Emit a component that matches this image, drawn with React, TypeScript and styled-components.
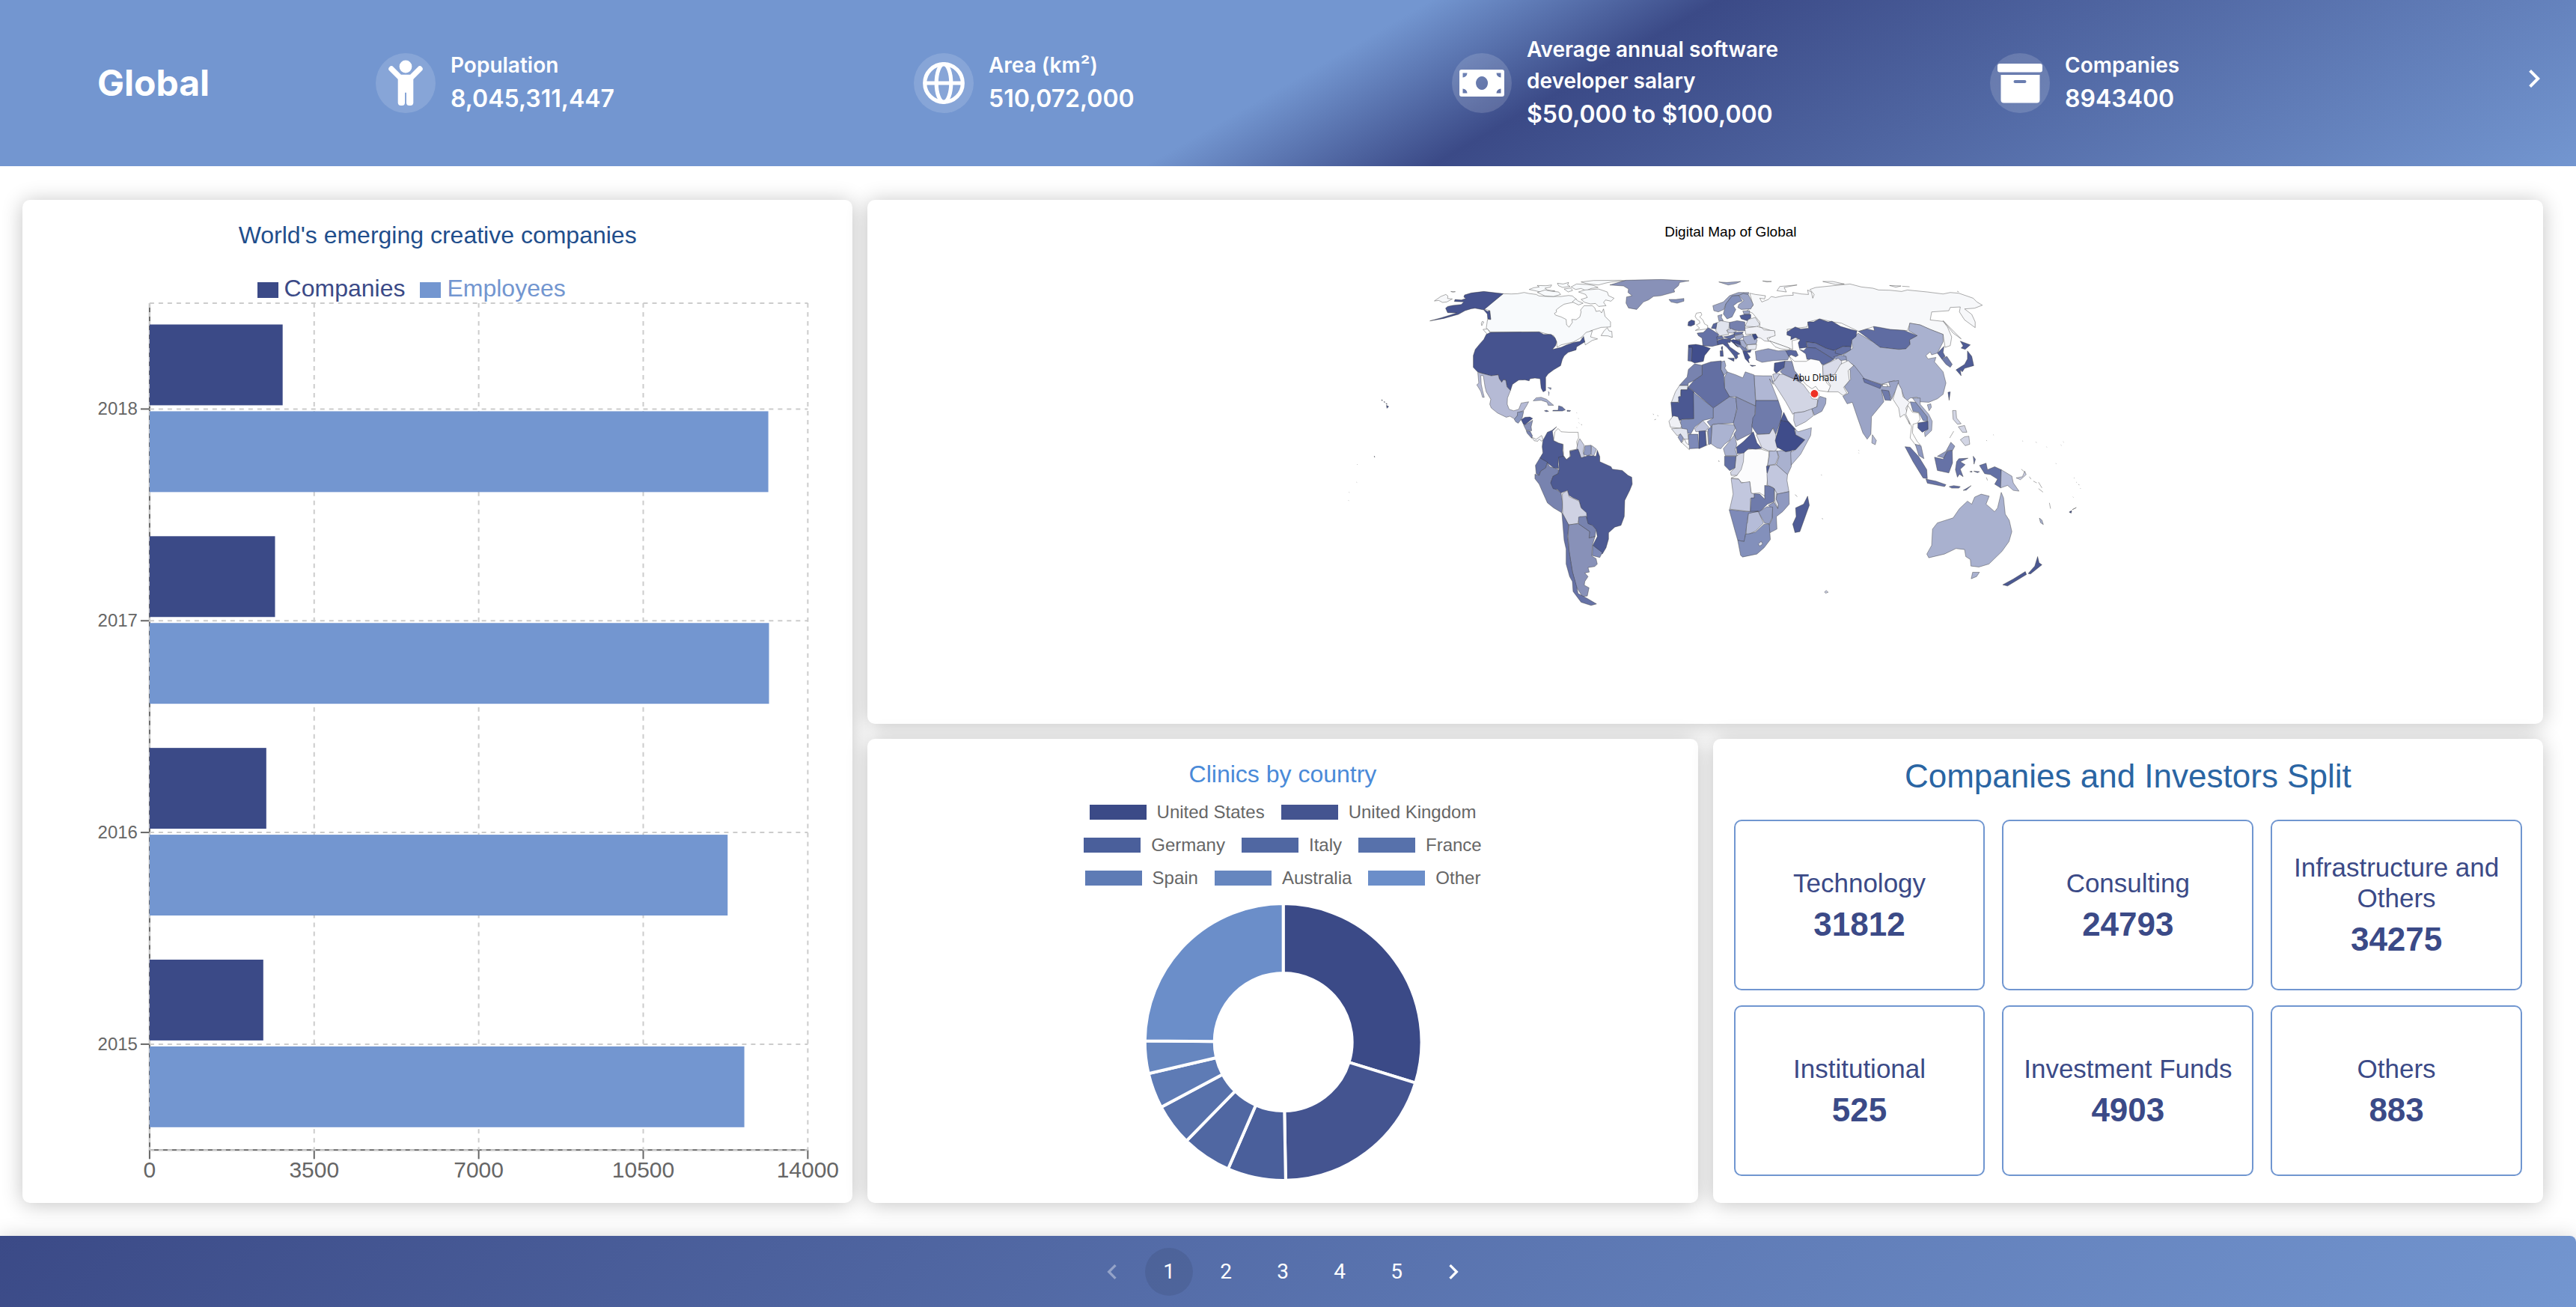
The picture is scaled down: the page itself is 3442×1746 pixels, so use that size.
import React from "react";
import styled, { createGlobalStyle } from "styled-components";

const NAVY = "#3b4a87";
const SKY = "#7396d0";
const SANS = `"Liberation Sans", Arial, Helvetica, sans-serif`;

const GlobalStyle = createGlobalStyle`
  *, *::before, *::after { box-sizing: border-box; }
  body { margin: 0; background: #fff; font-family: ${SANS}; }
  h1, h2, p, ul, dl, dd { margin: 0; padding: 0; }
  ul { list-style: none; }
  button { border: 0; padding: 0; background: none; color: inherit; font: inherit; cursor: pointer; }
`;

const Page = styled.div`
  display: flex;
  flex-direction: column;
  min-height: 100vh;
`;

/* ---------- header ---------- */

const Header = styled.header`
  display: flex;
  align-items: center;
  min-height: 222px;
  padding: 0 32px 0 130px;
  color: #fff;
  font-family: Inter, "Open Sans", sans-serif;
  background: linear-gradient(150deg, ${SKY} 50%, ${NAVY} 60%, ${SKY} 100%);
`;

const Title = styled.h1`
  flex: 0 0 372px;
  font-size: 48px;
  line-height: 60px;
  font-weight: 700;
`;

const Stats = styled.dl`
  flex: 1;
  display: grid;
  grid-template-columns: repeat(4, 1fr);
  align-items: center;
`;

const Stat = styled.div`
  display: flex;
  align-items: center;
  gap: 20px;
`;

const IconDisc = styled.span`
  flex: none;
  width: 80px;
  height: 80px;
  border-radius: 50%;
  background: rgba(255, 255, 255, 0.15);
  svg { display: block; }
`;

const StatText = styled.div`
  max-width: 360px;
  font-weight: 600;
  dt { font-size: 28px; line-height: 42px; }
  dd { font-size: 32px; line-height: 48px; }
`;

const NextStat = styled.button`
  flex: none;
  width: 48px;
  height: 48px;
  margin: 0 0 12px -16px;
  svg { display: block; }
`;

/* ---------- dashboard ---------- */

const Main = styled.main`
  flex: 1;
  display: grid;
  grid-template-columns: repeat(3, minmax(0, 1fr));
  grid-template-rows: minmax(0, 35fr) minmax(0, 31fr);
  gap: 20px;
  padding: 45px 44px 44px 30px;
`;

const Card = styled.section<{ $area: string }>`
  grid-area: ${(p) => p.$area};
  display: flex;
  flex-direction: column;
  min-height: 0;
  background: #fff;
  border-radius: 10px;
  box-shadow: 0 2px 28px rgba(0, 0, 0, 0.24);
`;

const CardTitle = styled.h2<{ $color: string; $large?: boolean }>`
  text-align: center;
  font-weight: 400;
  color: ${(p) => p.$color};
  font-size: ${(p) => (p.$large ? 44 : 32)}px;
  line-height: ${(p) => (p.$large ? 52 : 38)}px;
  padding-top: ${(p) => (p.$large ? 24 : 28)}px;
`;

const BarLegend = styled.ul`
  display: flex;
  justify-content: center;
  gap: 20px;
  padding: 34px 70px 0 0;
  font-size: 32px;
  line-height: 36px;
`;

const BarLegendItem = styled.li<{ $color: string }>`
  display: flex;
  align-items: center;
  gap: 8px;
  color: ${(p) => p.$color};
  &::before {
    content: "";
    width: 28px;
    height: 21px;
    margin-top: 4px;
    background: ${(p) => p.$color};
  }
`;

const Plot = styled.svg`
  display: block;
  flex: 1;
  width: 100%;
  min-height: 0;
  font-family: ${SANS};
`;

const PieLegend = styled.ul`
  align-self: center;
  display: flex;
  flex-wrap: wrap;
  justify-content: center;
  gap: 24px 22px;
  width: 560px;
  padding-top: 22px;
  color: #666;
  font-size: 24px;
  line-height: 20px;
`;

const PieLegendItem = styled.li<{ $color: string }>`
  display: flex;
  gap: 14px;
  &::before {
    content: "";
    width: 76px;
    height: 20px;
    background: ${(p) => p.$color};
  }
`;

const Tiles = styled.ul`
  flex: 1;
  display: grid;
  grid-template-columns: repeat(3, 1fr);
  grid-template-rows: repeat(2, 1fr);
  gap: 20px 23px;
  padding: 32px 28px 36px;
`;

const Tile = styled.li`
  display: flex;
  flex-direction: column;
  align-items: center;
  justify-content: center;
  gap: 10px;
  text-align: center;
  color: ${NAVY};
  border: 2px solid #7096d0;
  border-radius: 10px;
  font-size: 35px;
  line-height: 41px;
  strong { font-size: 44px; line-height: 50px; }
`;

/* ---------- footer ---------- */

const Footer = styled.footer`
  display: flex;
  justify-content: center;
  align-items: center;
  gap: 12px;
  min-height: 95px;
  padding-right: 14px;
  color: #fff;
  font-family: Roboto, sans-serif;
  font-size: 28px;
  border-radius: 0 8px 0 0;
  background: linear-gradient(135deg, ${NAVY}, ${SKY});
  box-shadow: 0 2px 28px rgba(0, 0, 0, 0.18);
`;

const PageButton = styled.button<{ $current?: boolean }>`
  display: grid;
  place-items: center;
  width: 64px;
  height: 64px;
  border-radius: 50%;
  background: ${(p) => (p.$current ? "rgba(0, 0, 0, 0.08)" : "none")};
  &:disabled { opacity: 0.38; }
`;

const Chevron = ({ size, back }: { size: number; back?: boolean }) => (
  <svg width={size} height={size} viewBox="0 0 24 24" fill="currentColor" aria-hidden="true">
    <path
      d={back
        ? "M15.41 7.41 14 6l-6 6 6 6 1.41-1.41L10.83 12z"
        : "M10 6 8.59 7.41 13.17 12l-4.58 4.59L10 18l6-6z"}
    />
  </svg>
);

const icons: Record<string, React.ReactNode> = {
  person: (
    <g fill="#fff">
      <circle cx="40" cy="18" r="8.4" />
      <path d="M21 21 34 34M59 21 46 34" stroke="#fff" strokeWidth="7.4" strokeLinecap="round" />
      <path d="M34 28.7h12l4.3 4V66.500a4 4 0 0 1-4 3.500h-1.500a3.800 3.800 0 0 1-3.800-3.500V52.700h-2V66.500a3.800 3.800 0 0 1-3.800 3.500h-1.500a4 4 0 0 1-4-3.500V32.700z" />
    </g>
  ),
  globe: (
    <g fill="none" stroke="#fff" strokeWidth="5.2">
      <circle cx="40" cy="40" r="25.3" />
      <ellipse cx="40" cy="40" rx="9.8" ry="25.3" />
      <path d="M15 40h50" />
    </g>
  ),
  money: (
    <path
      fill="#fff"
      fillRule="evenodd"
      d="M13 22H67a3 3 0 0 1 3 3V55a3 3 0 0 1-3 3H13a3 3 0 0 1-3-3V25a3 3 0 0 1 3-3zM14.500 26.500v6a6 6 0 0 0 6-6zM65.500 26.500h-6a6 6 0 0 0 6 6zM14.500 53.500h6a6 6 0 0 0-6-6zM65.500 53.500v-6a6 6 0 0 0-6 6zM40 31a8 9 0 1 0 .1 0z"
    />
  ),
  archive: (
    <g fill="#fff">
      <rect x="10" y="14" width="60" height="11.5" rx="3" />
      <path fillRule="evenodd" d="M14.500 29H66.500V62.500a4 4 0 0 1-4 4H18.500a4 4 0 0 1-4-4zM33.500 36a1.800 1.800 0 0 0 0 4h13a1.800 1.800 0 0 0 0-4z" />
    </g>
  ),
};

const stats = [
  { icon: "person", label: "Population", value: "8,045,311,447" },
  { icon: "globe", label: "Area (km²)", value: "510,072,000" },
  { icon: "money", label: "Average annual software developer salary", value: "$50,000 to $100,000" },
  { icon: "archive", label: "Companies", value: "8943400" },
];

/* ---------- bar chart ---------- */

const years = [
  { year: "2018", companies: 2830, employees: 13160 },
  { year: "2017", companies: 2668, employees: 13175 },
  { year: "2016", companies: 2482, employees: 12295 },
  { year: "2015", companies: 2418, employees: 12650 },
];

const BarChart = () => {
  const left = 170;
  const width = 880;
  const top = 2;
  const band = 283;
  const bottom = top + band * 4;
  const scale = (v: number) => (v / 14000) * width;
  const ticks = [0, 3500, 7000, 10500, 14000];
  return (
    <Plot viewBox="0 0 1110 1196" preserveAspectRatio="xMidYMin meet" role="img" aria-label="Companies and employees by year">
      <g stroke="#666" strokeWidth="2">
        <path d={`M${left} ${top}V${bottom}H${left + width}`} fill="none" />
        {ticks.map((t) => <path key={t} d={`M${left + scale(t)} ${bottom}v12`} />)}
        {years.map((y, i) => <path key={y.year} d={`M${left - 12} ${top + band * (i + 0.5)}h12`} />)}
      </g>
      <g stroke="#ccc" strokeWidth="2" strokeDasharray="6 6">
        {ticks.map((t) => <path key={t} d={`M${left + scale(t)} ${top}V${bottom}`} />)}
        {[0, 0.5, 1.5, 2.5, 3.5, 4].map((n) => <path key={n} d={`M${left} ${top + band * n}h${width}`} />)}
      </g>
      {years.map((y, i) => (
        <g key={y.year}>
          <rect x={left} y={top + band * i + 28.5} width={scale(y.companies)} height="108" fill={NAVY} />
          <rect x={left} y={top + band * i + 144.5} width={scale(y.employees)} height="108" fill={SKY} />
          <text x={left - 16} y={top + band * (i + 0.5) + 8} textAnchor="end" fontSize="24" fill="#666">{y.year}</text>
        </g>
      ))}
      {ticks.map((t) => (
        <text key={t} x={left + scale(t)} y={bottom + 37} textAnchor="middle" fontSize="30" fill="#666">{t}</text>
      ))}
    </Plot>
  );
};

/* ---------- doughnut ---------- */

const clinics = [
  { name: "United States", color: "#3b4a87", end: 107.2 },
  { name: "United Kingdom", color: "#445490", end: 179 },
  { name: "Germany", color: "#4a5f9b", end: 203.5 },
  { name: "Italy", color: "#5067a2", end: 224.4 },
  { name: "France", color: "#5771ab", end: 241.9 },
  { name: "Spain", color: "#5e7bb5", end: 256.8 },
  { name: "Australia", color: "#6686bf", end: 270.5 },
  { name: "Other", color: "#6b8ec9", end: 360 },
];

const ring = (from: number, to: number, outer: number, inner: number) => {
  const at = (deg: number, r: number) => {
    const a = (deg * Math.PI) / 180;
    return `${(Math.sin(a) * r).toFixed(2)} ${(-Math.cos(a) * r).toFixed(2)}`;
  };
  return `M${at(from, outer)}A${outer} ${outer} 0 0 1 ${at(to, outer)}L${at(to, inner)}A${inner} ${inner} 0 0 0 ${at(from, inner)}z`;
};

const Doughnut = () => (
  <Plot viewBox="-556 -205 1110 416" role="img" aria-label="Clinics by country">
    {clinics.map((c, i) => (
      <path key={c.name} d={ring(i ? clinics[i - 1].end : 0, c.end, 185, 92)} fill={c.color} stroke="#fff" strokeWidth="4" />
    ))}
  </Plot>
);

/* ---------- world map ---------- */

type Land = [string, string];

const americas: Land[] = [
  ["#f8fafc", "M568 157 600 158 625 157 652 152 670 156 700 160 712 166 745 168 800 168 830 164 845 166 862 180 845 192 812 199 795 210 780 222 782 230 773 236 778 243 800 250 820 260 822 282 832 291 845 272 843 260 860 261 875 250 880 230 878 222 892 205 925 205 935 214 940 228 955 225 962 234 970 218 976 248 998 270 998 290 960 292 920 305 880 333 850 350 800 362 784 372 782 350 770 325 712 310 517 310 500 295 505 260 518 260 514 225 490 218z"],
  ["#f8fafc", "M672 140 690 133 712 130 704 124 740 125 762 122 758 130 735 135 745 142 775 146 745 152 715 150 700 146z"],
  ["#f8fafc", "M705 152 735 142 760 147 790 150 798 160 770 168 735 166z"],
  ["#f8fafc", "M785 115 808 118 830 112 826 122 836 128 806 132 790 125zM812 138 838 134 846 144 828 150z"],
  ["#f8fafc", "M840 130 862 118 905 120 930 124 948 132 920 136 900 145 880 136 858 140z"],
  ["#f8fafc", "M880 110 930 104 1040 103 1060 105 1000 110 980 114 950 122 930 120 900 116z"],
  ["#f8fafc", "M870 150 895 142 925 140 950 138 985 150 990 165 1012 175 1000 187 978 182 970 192 980 205 950 208 938 196 918 198 895 192 880 180 905 172 898 160z"],
  ["#f8fafc", "M845 190 858 178 868 186 888 195 870 202zM960 325 972 306 985 293 992 306 1003 308 1005 332 988 326z"],
  ["#f8fafc", "M880 333 900 312 925 305 918 330 946 338 925 344 897 362 893 345zM487 300 505 298 516 314 508 324zM480 276 484 268 490 270 482 285z"],
  ["#f7f8fa", "M292 186 318 168 338 160 346 166 345 176 364 178 342 190 325 192 310 184zM358 148 376 149 366 151z"],
  ["#46538f", "M413 162 440 154 490 148 568 157 492 220 505 228 514 225 518 260 506 258 504 238 490 222 455 215 440 217 415 225 388 240 372 244 330 256 274 266 318 254 350 244 382 234 345 233 337 215 345 208 365 204 400 200 410 190 372 188 375 180 400 182 418 176 410 170z"],
  ["#46538f", "M500 320 517 312 712 310 730 320 760 320 776 334 782 350 778 365 765 380 800 372 822 362 850 352 876 348 890 328 895 350 862 370 860 382 828 392 812 406 805 420 798 445 770 462 748 478 738 492 738 545 728 550 720 535 716 498 695 495 675 498 672 506 655 502 630 503 605 520 597 545 583 530 578 503 568 502 562 512 552 498 548 482 520 486 490 478 465 470 448 452 448 405 456 380 474 358 490 340z"],
  ["#b5bad5", "M466 472 490 478 520 486 548 482 552 498 562 512 568 502 578 503 583 530 597 545 585 575 584 600 592 620 610 626 630 620 640 595 670 590 662 605 650 625 632 632 615 660 595 648 580 652 545 635 520 615 514 600 518 580 500 550 495 530 488 485 478 485 480 520 486 548 492 572 485 572 478 548 462 522 470 515z"],
  ["#8a96bd", "M612 660 625 645 625 632 650 628 644 655 628 676 618 670z"],
  ["#46538f", "M640 662 655 652 675 651 686 657 672 668 658 680 650 682z"],
  ["#8891b8", "M650 684 660 680 686 664 680 690 682 706 660 704z"],
  ["#7883af", "M660 706 676 708 685 726 682 736 664 716z"],
  ["#f3f4f8", "M682 732 700 740 722 725 728 742 722 748 712 740 706 748 692 746z"],
  ["#a5adcc", "M688 586 700 574 720 572 742 580 770 604 748 604 744 592 720 584z"],
  ["#6370a4", "M790 606 804 610 817 622 805 627 766 627 768 624 788 624zM733 626 742 624 750 628 740 630zM824 624 838 625 836 628 824 628z"],
  ["#8a96bd", "M746 533 760 534 758 542M748 548 752 552 750 566"],
  ["#4d5a93", "M782 690 765 708 770 745 790 755 808 760 806 785 810 810 790 815 788 840 790 858 770 855 745 835 715 815 727 795 724 770 727 745 745 712 764 704z"],
  ["#fdfdfe", "M775 710 788 697 800 710 830 712 868 712 870 735 862 750 866 770 862 780 835 785 835 810 820 822 810 805 808 760 790 755 770 745z"],
  ["#c8cce0", "M875 738 893 765 888 790 895 812 880 815 872 792 863 775 868 750z"],
  ["#8f99c0", "M896 766 920 764 922 800 905 806 890 800z"],
  ["#b5bcd8", "M922 765 942 780 930 808 920 800z"],
  ["#6370a4", "M715 815 745 832 738 855 718 868 712 885 700 878 697 845z"],
  ["#7883af", "M745 835 755 850 775 856 790 862 788 878 768 888 760 910 768 932 785 945 800 955 806 1000 803 1035 770 1015 745 995 725 950 712 920 695 898 695 880 712 885 718 868 738 855z"],
  ["#4d5a93", "M790 812 810 808 822 822 838 808 835 788 868 780 880 815 910 805 940 808 945 784 955 810 955 830 1000 850 1005 860 1045 865 1068 885 1083 892 1085 920 1075 945 1055 985 1053 1050 1040 1085 1015 1092 990 1115 990 1140 980 1175 965 1200 927 1165 945 1130 940 1102 925 1085 905 1080 900 1040 880 1015 872 985 848 975 832 965 825 945 800 955 785 942 768 938 758 915 768 888 788 878 792 860z"],
  ["#cfd2e3", "M805 958 825 945 832 970 872 988 880 1015 902 1035 903 1052 875 1050 866 1078 830 1083 815 1055 806 1035z"],
  ["#7883af", "M870 1052 900 1048 908 1078 925 1085 940 1102 936 1130 912 1136 914 1110 870 1080z"],
  ["#7e8ab8", "M927 1165 965 1194 955 1214 925 1206z"],
  ["#8891b8", "M830 1083 868 1078 914 1110 912 1136 936 1130 925 1165 923 1208 940 1218 945 1240 935 1250 908 1254 913 1272 895 1276 908 1290 895 1310 893 1325 912 1335 905 1368 885 1370 860 1330 845 1270 832 1190 828 1130z"],
  ["#6672a6", "M803 1035 815 1055 830 1083 826 1130 832 1190 845 1270 862 1330 868 1358 905 1378 942 1400 920 1406 880 1393 848 1350 845 1310 834 1290 820 1240 820 1180 812 1145z"],
  ["#8891b8", "M995 122 1060 103 1200 100 1313 105 1275 112 1270 125 1252 140 1255 150 1200 165 1170 168 1150 182 1130 190 1103 220 1070 214 1060 195 1062 170 1084 165 1068 152 1070 138 1050 126z"],
  ["#8390bb", "M1232 180 1260 180 1292 176 1292 187 1265 195 1240 190z"],
  ["#46538f", "M80 582 84 583 83 586zM90 589 94 591 92 593zM98 596 103 599 100 600zM100 604 109 609 102 616zM51 808 54 810 52 812z"],
  ["#8891b8", "M862 634 864 636M869 656 870 658M871 674 873 676M880 681 884 683M862 693 864 694M1168 639 1172 642M1186 644 1189 648M1174 662 1180 660M1432 826 1434 830"],
  ["#46538f", "M-52 985 -50 987M-50 952 -48 954M-18 840 -16 842M-20 912 -18 913"],
];

const east: Land[] = [
  ["#fcfcfd", "M285 785 320 778 350 780 378 790 372 850 372 900 368 940 362 968 345 955 315 958 310 910 300 918 280 912 270 898 245 895 265 885 280 850z"],
  ["#d2d5e4", "M262 808 290 788 288 830 280 862 265 885 245 885 243 872 258 855z"],
  ["#6370a4", "M222 808 262 808 258 855 240 866 222 845z"],
  ["#b5bcd8", "M378 788 405 786 410 810 400 840 372 845 378 810z"],
  ["#a9b1cf", "M405 788 420 785 440 790 455 785 455 850 442 882 403 842 412 810z"],
  ["#4f5c96", "M368 848 380 846 380 868 370 876z"],
  ["#c2c7de", "M380 845 403 842 442 882 440 905 447 950 405 960 392 934 372 925 370 880z"],
  ["#c2c7de", "M245 898 272 900 280 915 310 910 315 955 326 960 326 975 312 978 312 1030 240 1020 252 960z"],
  ["#6f7bab", "M315 975 326 975 326 958 345 960 362 980 362 925 380 928 396 938 395 990 372 1000 345 1030 312 1030z"],
  ["#e1e4ee", "M396 940 404 955 403 980 411 1000 408 1018 398 990z"],
  ["#8f99c0", "M405 960 447 950 448 1000 425 1030 403 1050 405 1100 380 1115 375 1090 388 1060 390 1020 375 1005 395 992 408 1018 410 1000 402 980z"],
  ["#959fc4", "M340 1032 370 1010 390 1012 388 1055 378 1080 362 1076z"],
  ["#b5bcd8", "M305 1035 340 1030 358 1076 330 1108 298 1125 296 1078 302 1075z"],
  ["#7e8ab8", "M238 1022 300 1030 340 1028 305 1038 300 1078 292 1150 268 1145 258 1105z"],
  ["#8390bb", "M268 1145 290 1150 296 1120 312 1118 330 1112 360 1080 378 1080 382 1142 360 1175 335 1200 285 1212 278 1205z"],
  ["#e1e4ee", "M340 1160 350 1149 355 1160 345 1168z"],
  ["#4f5c96", "M512 968 518 1005 510 1030 485 1110 468 1114 460 1080 472 1050 470 1015 498 1000z"],
  ["#f7f8fa", "M310 155 330 160 365 165 362 178 345 175 352 190 375 180 385 168 400 172 430 165 462 163 460 152 490 158 515 160 512 142 525 150 530 175 535 160 520 140 540 132 600 125 660 118 700 130 740 135 760 142 800 143 840 148 860 142 930 150 985 158 1010 152 1040 155 1090 175 1103 190 1122 203 1095 215 1060 218 1085 240 1097 270 1097 293 1060 262 1042 230 1045 210 1010 212 1005 225 945 230 940 262 985 268 1000 290 1015 330 1010 365 992 372 985 320 940 300 905 282 870 275 860 305 790 300 740 290 690 308 630 275 600 270 555 258 515 270 510 290 440 300 445 318 480 340 458 345 460 380 400 355 372 345 398 310 345 290 345 270 320 235 300 225 322 205z"],
  ["#f7f8fa", "M405 145 415 128 475 122 430 132 438 150zM565 108 600 108 640 118 610 120zM798 124 838 126 820 131zM842 127 868 129M355 106 386 108 370 110zM985 265 1048 338 1020 315zM1034 147 1040 150"],
  ["#9ba4c6", "M202 110 230 112 278 108 262 116 235 122z"],
  ["#5f6ca2", "M690 308 720 298 745 305 742 288 765 292 800 300 850 304 895 325 868 342 870 360 855 378 830 380 765 372 740 350z"],
  ["#a9b1cf", "M688 315 740 350 765 372 830 380 855 378 870 360 868 342 895 325 865 305 868 275 905 282 940 300 985 320 985 350 965 395 945 402 940 390 925 405 932 418 960 412 955 430 985 470 995 515 985 560 965 578 935 592 905 590 895 572 870 575 855 590 835 530 815 505 770 520 710 498 690 480 670 440 650 430 636 402 670 375 665 345z"],
  ["#a9b1cf", "M930 602 942 598 944 612 936 626z"],
  ["#4f5c96", "M1002 552 1010 550 1006 584z"],
  ["#5a679e", "M965 395 988 368 985 392 992 408 980 418z"],
  ["#6f7bab", "M980 418 998 408 1017 440 1010 452 995 440z"],
  ["#4f5c96", "M1045 347 1080 362 1062 380 1048 375 1055 366zM1070 386 1085 408 1092 445 1060 456 1052 470 1045 462 1048 486 1030 462 1060 440 1070 418z"],
  ["#9ba4c6", "M650 448 675 445 692 470 710 498 765 535 772 520 800 530 795 510 830 505 828 530 815 555 805 580 795 548 770 545 778 590 735 650 733 720 720 740 705 715 685 650 668 592 650 598 635 568 655 555 640 530 662 500 660 462z"],
  ["#6672a6", "M705 495 735 508 770 522 765 537 710 512z"],
  ["#fff", "M773 520 790 520 790 530 774 528z"],
  ["#6f7bab", "M770 542 795 546 803 585 782 583z"],
  ["#b0b7d4", "M738 722 752 745 748 762 736 755z"],
  ["#f3f4f8", "M828 515 840 540 845 570 868 592 855 615 862 645 868 680 850 640 835 652 830 615 810 580 818 548z"],
  ["#fff", "M862 605 878 632 900 635 905 660 895 675 880 680 878 715 895 750 905 762 892 768 870 735 875 690 855 640z"],
  ["#8390bb", "M870 590 890 592 930 650 930 668 915 665 900 632 880 628z"],
  ["#abb3d1", "M878 575 905 575 905 600 935 640 947 668 945 705 922 730 920 712 932 700 930 650 895 600z"],
  ["#4f5c96", "M897 675 932 668 932 700 912 712 897 695z"],
  ["#8f99c0", "M888 760 908 766 918 818 900 805zM965 808 995 788 1012 752 1026 768 1018 785 1000 785 988 815z"],
  ["#6672a6", "M852 770 870 772 900 810 928 862 930 898 915 895 880 830zM925 900 960 908 995 922 990 930 930 916z"],
  ["#6672a6", "M955 812 985 820 1000 788 1017 785 1018 835 1005 875 965 865zM1032 830 1040 818 1072 816 1045 830 1062 842 1045 860 1055 890 1042 880 1035 892 1028 862z"],
  ["#6672a6", "M1090 808 1098 820 1093 840zM1006 930 1022 926 1045 930 1040 936 1015 936zM1055 945 1083 926 1066 944zM1078 870 1086 868 1086 872zM1092 868 1112 870 1105 874zM1136 893 1140 905"],
  ["#6370a4", "M1112 845 1135 836 1140 862 1165 850 1188 862 1186 935 1165 920 1175 900 1150 882 1130 878z"],
  ["#b5bcd8", "M1188 862 1225 888 1230 915 1250 948 1230 945 1210 925 1186 935z"],
  ["#c8cce0", "M1240 895 1262 890 1270 868 1275 882 1255 902zM1258 860 1270 872"],
  ["#5f6ca2", "M1286 890 1292 900M1300 908 1312 915M1318 912 1330 935M1318 938 1334 952M1356 995 1360 1018"],
  ["#d2d5e4", "M1018 625 1030 625 1032 655 1048 678 1035 680 1020 660zM1038 690 1060 685 1068 712 1052 712zM1045 742 1060 730 1075 728 1078 760 1062 766zM1008 735 1022 708"],
  ["#a9b1cf", "M1188 953 1196 975 1202 1040 1216 1065 1225 1110 1215 1150 1190 1190 1145 1240 1110 1252 1082 1248 1080 1222 1064 1210 1060 1182 1030 1178 990 1200 935 1215 928 1200 945 1165 948 1100 965 1075 1020 1055 1042 1018 1070 988 1085 1000 1095 972 1118 960 1146 968 1135 1000 1165 1030 1175 1015z"],
  ["#a9b1cf", "M1088 1273 1112 1273 1102 1290 1083 1299zM1321 1056 1330 1064 1335 1082 1325 1074z"],
  ["#4b5892", "M1315 1210 1320 1235 1330 1243 1290 1280 1282 1278 1305 1248zM1272 1270 1276 1282 1210 1328 1193 1323 1230 1300z"],
  ["#3b4a87", "M1425 1032 1434 1026 1432 1036zM1436 1022 1450 1014 1440 1020z"],
  ["#c8cce0", "M571 1352 577 1346 584 1353 575 1357z"],
  ["#8891b8", "M560 882 561 885M562 1057 566 1060M690 784 692 786M690 794 691 796M1136 744 1138 747M1309 751 1311 754M1404 750 1406 752M1160 722 1162 724M1262 747 1264 748M1346 770 1347 772M1396 763 1398 765M1378 837 1380 838M1442 895 1444 896M1450 912 1452 914M1458 920 1460 924M1464 936 1465 938M1438 971 1440 973M468 962 476 970M200 826 203 829"],
];

const centre: Land[] = [
  ["#9ba4c6", "M148 85 190 70 215 45 250 32 292 32 290 40 270 36 252 44 225 46 200 78 192 100 170 110 152 105z"],
  ["#8390bb", "M225 46 252 44 266 66 248 72 230 85 240 100 225 130 205 138 190 118 200 78z"],
  ["#9ba4c6", "M252 44 270 36 290 40 310 80 300 98 262 100 248 92 252 80 272 65z"],
  ["#9ba4c6", "M268 106 295 105 296 118 272 118z"],
  ["#4f5c96", "M256 125 275 120 300 120 300 134 285 145 262 138z"],
  ["#9ba4c6", "M168 125 185 120 182 132 190 145 172 145z"],
  ["#fff", "M82 115 100 112 104 122 95 130 108 142 115 158 128 165 125 178 78 184 95 175 82 162 96 155 94 145 85 140 77 128z"],
  ["#46538f", "M50 150 62 142 75 146 75 160 60 167 48 165z"],
  ["#6672a6", "M85 195 110 192 130 173 145 182 172 200 165 225 170 242 145 248 108 245 105 215 90 205z"],
  ["#414e8c", "M50 243 80 240 108 245 138 256 115 285 110 308 75 315 62 308 65 252 50 252z"],
  ["#5a679e", "M50 252 65 252 63 308 48 306z"],
  ["#e1e4ee", "M162 155 180 145 215 152 212 176 204 184 212 200 175 206 160 185z"],
  ["#5a679e", "M142 175 150 158 165 153 160 178z"],
  ["#7580ae", "M215 152 245 145 276 150 278 185 250 186 215 176z"],
  ["#c8cce0", "M204 184 222 177 243 187 230 195 212 194z"],
  ["#6672a6", "M163 210 185 206 190 216 165 221zM232 192 270 190 265 198 235 204z"],
  ["#5f6ca2", "M190 210 212 206 235 198 235 212 215 220z"],
  ["#4f5c96", "M165 225 190 217 220 220 218 232 206 232 216 250 256 278 246 282 248 292 240 300 232 285 205 252 188 238 168 242zM208 295 234 295 232 308zM177 266 188 264 190 288 178 288zM182 250 187 248 187 262 182 260z"],
  ["#a5adcc", "M235 206 268 198 272 208 255 220 240 222z"],
  ["#a9b1cf", "M268 210 300 202 326 222 322 238 285 242 272 226z"],
  ["#3b4a87", "M305 200 320 198 330 212 315 222z"],
  ["#e5e8f1", "M285 242 324 240 320 260 288 262z"],
  ["#7580ae", "M225 225 255 222 275 240 286 262 270 268 258 252 240 245z"],
  ["#a5adcc", "M255 222 270 222 284 245 278 256 262 245z"],
  ["#414e8c", "M218 225 230 220 255 228 258 242 242 236 232 232 250 252z"],
  ["#46538f", "M268 268 302 262 298 272 285 272 298 292 290 300 294 315 278 298zM297 323 320 325 305 328z"],
  ["#e5e8f1", "M278 165 290 140 318 132 336 160 325 170 282 168z"],
  ["#f0f1f6", "M276 175 325 168 345 174 352 182 395 185 398 205 365 215 372 228 355 226 340 215 328 212 320 198 280 200z"],
  ["#8f99c0", "M318 268 345 262 370 257 410 266 440 264 455 285 448 302 390 305 345 312 322 302z"],
  ["#5a679e", "M440 265 458 262 482 266 490 284 480 290 462 282 452 288z"],
  ["#f7f8fa", "M376 226 400 235 428 245 455 255 456 262 420 258 398 250z"],
  ["#4b5892", "M445 190 478 170 500 178 532 175 528 150 552 150 575 138 610 150 625 147 660 168 700 180 725 186 722 208 705 222 702 250 670 248 640 262 630 265 600 255 560 235 522 230 527 252 495 256 490 234 498 222 480 212 460 222 462 208 445 202z"],
  ["#6672a6", "M523 230 560 235 600 255 640 266 668 278 650 284 632 300 600 280 560 255 530 255z"],
  ["#5f6ca2", "M495 260 512 265 525 252 560 255 600 280 632 300 620 308 590 322 560 302 525 300 520 278z"],
  ["#6672a6", "M640 262 670 248 702 250 700 262 665 282 638 275z"],
  ["#8f99c0", "M632 290 660 283 682 288 684 302 650 306z"],
  ["#4b5892", "M395 315 437 307 434 332 402 356 393 345z"],
  ["#c8cce0", "M388 360 402 356 415 358 412 378 395 388z"],
  ["#8891b8", "M437 307 465 308 478 345 508 385 500 392 475 380 430 360 418 350 434 332z"],
  ["#fcfcfd", "M452 285 475 308 522 308 540 298 575 305 588 325 590 365 605 395 620 410 610 430 572 425 560 408 545 418 520 400 500 375 475 345 465 308z"],
  ["#d9dbe9", "M588 325 620 310 650 295 665 308 660 335 635 362 590 365z"],
  ["#eff0f5", "M660 320 690 305 712 325 690 345 695 385 672 412 685 435 670 445 650 430 610 430 620 405 592 365 635 362z"],
  ["#d2d5e4", "M395 388 415 360 430 360 475 380 510 400 545 448 568 462 565 490 545 500 512 510 475 515 468 520 440 470 405 415 385 385z"],
  ["#c8cce0", "M473 515 512 510 545 498 552 525 520 550 480 570 472 545z"],
  ["#9ba4c6", "M570 460 578 448 602 456 600 478 585 508 555 524 545 498 565 490z"],
  ["#fff", "M540 448 555 452 572 434 574 450 566 460 546 458z"],
  ["#b0b7d4", "M313 365 350 366 384 366 390 400 375 378 410 465 320 465z"],
  ["#959fc4", "M195 372 205 350 240 362 268 374 278 350 313 362 320 487 240 450 215 450 195 415z"],
  ["#9ba4c6", "M180 310 195 306 200 325 196 335 206 350 192 364 180 340z"],
  ["#636fa3", "M105 322 140 310 182 306 180 340 192 364 195 415 215 450 150 495 50 410 72 385 105 362z"],
  ["#7883af", "M75 318 105 324 105 362 72 385 50 395 48 406 14 404 45 370 50 340z"],
  ["#e5e8f1", "M14 405 48 405 46 422 20 422 18 445 8 472 -18 472 -2 430z"],
  ["#4b5892", "M20 422 46 422 48 410 72 430 72 538 25 540 15 545 -15 530 -20 472 12 472 10 450 20 448z"],
  ["#8390bb", "M70 432 150 495 150 535 108 545 75 572 60 598 30 592 18 560 20 542 72 538z"],
  ["#8f99c0", "M150 495 215 450 240 455 245 490 232 555 150 560 140 570 125 550 150 535z"],
  ["#8891b8", "M240 450 318 487 316 530 305 560 305 595 245 625 232 600 242 585 230 555 245 500z"],
  ["#6f7bab", "M320 465 410 465 425 510 420 545 400 600 390 575 375 598 325 600 305 570 308 535 318 520z"],
  ["#abb3d1", "M145 562 170 558 232 562 238 575 215 625 195 640 180 658 165 655 140 638z"],
  ["#bfc4dc", "M75 578 108 545 132 572 118 588 80 590z"],
  ["#4f5c96", "M92 588 118 586 122 645 92 658z"],
  ["#fff", "M119 588 126 588 130 640 123 645z"],
  ["#7e8ab8", "M128 580 144 568 140 638 132 642zM50 600 88 600 92 656 52 658z"],
  ["#eff0f5", "M-28 548 -10 526 8 530 22 565 20 576 -22 572z"],
  ["#e1e4ee", "M-18 578 20 576 45 580 50 620 30 620 18 600 5 606z"],
  ["#8f99c0", "M8 612 18 598 30 615 22 634z"],
  ["#f5f6f9", "M24 634 34 618 42 636 54 644 54 662z"],
  ["#a9b1cf", "M235 602 244 640 238 662 246 686 198 686 190 658 215 628z"],
  ["#4f5c96", "M242 652 270 630 310 590 325 635 344 656 320 660 290 658 272 675 246 678z"],
  ["#d9dbe9", "M322 602 375 598 388 576 400 600 408 655 395 668 370 666 345 655z"],
  ["#4b5892", "M420 545 432 512 448 545 480 580 470 582 448 552z"],
  ["#3f4c8a", "M398 625 420 545 450 550 475 582 480 602 517 622 480 662 440 670 405 652z"],
  ["#b5bcd8", "M478 580 490 590 543 574 540 605 500 680 462 724 460 672 480 662 517 622 480 602z"],
];

const Lands = ({ lands, transform }: { lands: Land[]; transform: string }) => (
  <g transform={transform}>
    {lands.map(([fill, d], i) => <path key={i} d={d} fill={fill} vectorEffect="non-scaling-stroke" />)}
  </g>
);

const WorldMap = () => (
  <Plot viewBox="0 0 2238 690" preserveAspectRatio="xMidYMin meet" role="img" aria-label="Digital Map of Global">
    <text x="1153" y="49" textAnchor="middle" fontSize="19" fill="#000">Digital Map of Global</text>
    <g stroke="#333" strokeOpacity="0.4" strokeWidth="1" strokeLinejoin="round">
      <Lands lands={americas} transform="translate(660 73) scale(.33333)" />
      <Lands lands={east} transform="translate(1060 73) scale(.38265 .33333)" />
      <Lands lands={centre} transform="translate(1080 113) scale(.33333)" />
    </g>
    <circle cx="1265" cy="259" r="5.5" fill="#ee3124" stroke="#fff" />
    <text x="1266" y="242" textAnchor="middle" fontSize="12" fontFamily={`"Open Sans", sans-serif`} fill="#000">Abu Dhabi</text>
  </Plot>
);

const split = [
  ["Technology", "31812"],
  ["Consulting", "24793"],
  ["Infrastructure and Others", "34275"],
  ["Institutional", "525"],
  ["Investment Funds", "4903"],
  ["Others", "883"],
];

export default function App() {
  return (
    <Page>
      <GlobalStyle />
      <Header>
        <Title>Global</Title>
        <Stats>
          {stats.map((s) => (
            <Stat key={s.label}>
              <IconDisc><svg width="80" height="80" viewBox="0 0 80 80" aria-hidden="true">{icons[s.icon]}</svg></IconDisc>
              <StatText>
                <dt>{s.label}</dt>
                <dd>{s.value}</dd>
              </StatText>
            </Stat>
          ))}
        </Stats>
        <NextStat type="button" aria-label="Next"><Chevron size={48} /></NextStat>
      </Header>

      <Main>
        <Card $area="1 / 1 / 3 / 2">
          <CardTitle $color="#1f4e8c">World's emerging creative companies</CardTitle>
          <BarLegend>
            <BarLegendItem $color={NAVY}>Companies</BarLegendItem>
            <BarLegendItem $color={SKY}>Employees</BarLegendItem>
          </BarLegend>
          <BarChart />
        </Card>

        <Card $area="1 / 2 / 2 / 4">
          <WorldMap />
        </Card>

        <Card $area="2 / 2 / 3 / 3">
          <CardTitle $color="#4a8ad8">Clinics by country</CardTitle>
          <PieLegend>
            {clinics.map((c) => <PieLegendItem key={c.name} $color={c.color}>{c.name}</PieLegendItem>)}
          </PieLegend>
          <Doughnut />
        </Card>

        <Card $area="2 / 3 / 3 / 4">
          <CardTitle $color="#2a65a3" $large>Companies and Investors Split</CardTitle>
          <Tiles>
            {split.map(([name, count]) => (
              <Tile key={name}>
                <span>{name}</span>
                <strong>{count}</strong>
              </Tile>
            ))}
          </Tiles>
        </Card>
      </Main>

      <Footer>
        <PageButton type="button" aria-label="Previous page" disabled><Chevron size={40} back /></PageButton>
        {[1, 2, 3, 4, 5].map((n) => (
          <PageButton key={n} type="button" $current={n === 1}>{n}</PageButton>
        ))}
        <PageButton type="button" aria-label="Next page"><Chevron size={40} /></PageButton>
      </Footer>
    </Page>
  );
}
